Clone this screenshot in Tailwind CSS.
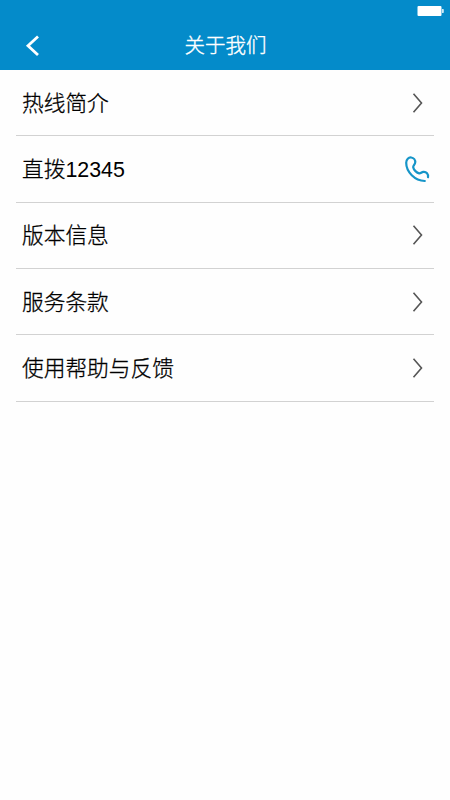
<!DOCTYPE html>
<html lang="zh-CN">
<head>
<meta charset="utf-8">
<title>关于我们</title>
<script src="https://cdn.jsdelivr.net/npm/@tailwindcss/browser@4"></script>
</head>
<body class="bg-[#fefefe] font-['Liberation_Sans','Noto_Sans_CJK_SC',sans-serif] text-black">
<div class="w-[450px] h-[800px] flex flex-col overflow-hidden">
  <header class="h-[69.5px] shrink-0 bg-[#048bca] flex flex-col">
    <div class="h-[22px] flex justify-end pt-[6px] pr-[6px]">
      <svg width="27" height="10" viewBox="0 0 27 10" fill="#fff"><rect x="0.5" width="24" height="10" rx="1"/><path d="M25 3h1.2q.6 0 .6.8v2.4q0 .8-.6.8H25z" fill-opacity=".8"/></svg>
    </div>
    <div class="h-[48px] grid grid-cols-[60px_1fr_60px] items-center text-white">
      <svg class="ml-[25px]" width="15" height="22" viewBox="0 0 15 22" fill="none" stroke="#fff" stroke-width="2.8"><path d="M13 1.5 3 10.7l10 9.3"/></svg>
      <h1 class="text-[20.5px] leading-[30px] text-center font-light pt-px pl-px [-webkit-text-stroke:0.35px_white]">关于我们</h1>
    </div>
  </header>
  <main class="px-4 pt-[0.6px] text-[21.7px] leading-[32px] font-light">
    <div class="h-[66.3px] flex items-center justify-between pl-[6px] pr-[11px] border-b border-[#d2d2d2]"><span class="pt-[2px] [-webkit-text-stroke:0.3px_black]">热线简介</span><svg width="11" height="20" viewBox="0 0 11 20" fill="none" stroke="#555" stroke-width="1.6"><path d="m1.5 .7 8 9.3-8 9.3"/></svg></div>
    <div class="h-[66.3px] flex items-center justify-between pl-[6px] pr-[4px] border-b border-[#d2d2d2]"><span class="pt-[2px]"><span class="[-webkit-text-stroke:0.3px_black]">直拨</span><span class="text-[21.4px]">12345</span></span><svg width="26" height="28" viewBox="0 0 26 28" fill="none" stroke="#1695c8" stroke-width="2.2" stroke-linecap="round" stroke-linejoin="round"><path d="M20.800 26C10.800 25.500 2.200 17 2.200 7.800 2.200 4.300 4.700 2.200 7.200 2.500c2.500.3 4.300 2.600 4 5.200-.2 2-2.300 2.800-2 4.500.5 2.700 3.500 5.700 6 6.200 1.500.2 2.200-1.200 4.200-1.500 3-.3 5.100 2.300 4.600 5.300"/></svg></div>
    <div class="h-[66.3px] flex items-center justify-between pl-[6px] pr-[11px] border-b border-[#d2d2d2]"><span class="pt-[2px] [-webkit-text-stroke:0.3px_black]">版本信息</span><svg width="11" height="20" viewBox="0 0 11 20" fill="none" stroke="#555" stroke-width="1.6"><path d="m1.500 .7 8 9.300-8 9.300"/></svg></div>
    <div class="h-[66.3px] flex items-center justify-between pl-[6px] pr-[11px] border-b border-[#d2d2d2]"><span class="pt-[2px] [-webkit-text-stroke:0.3px_black]">服务条款</span><svg width="11" height="20" viewBox="0 0 11 20" fill="none" stroke="#555" stroke-width="1.6"><path d="m1.500 .7 8 9.300-8 9.300"/></svg></div>
    <div class="h-[66.3px] flex items-center justify-between pl-[6px] pr-[11px] border-b border-[#d2d2d2]"><span class="pt-[2px] [-webkit-text-stroke:0.3px_black]">使用帮助与反馈</span><svg width="11" height="20" viewBox="0 0 11 20" fill="none" stroke="#555" stroke-width="1.6"><path d="m1.500 .7 8 9.300-8 9.300"/></svg></div>
  </main>
</div>
</body>
</html>
